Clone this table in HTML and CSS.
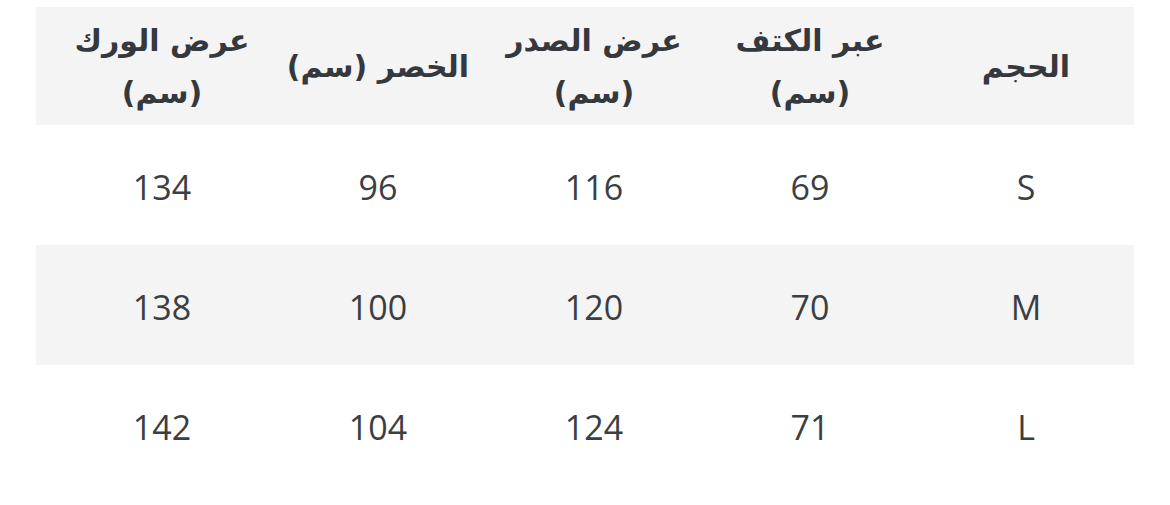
FILE: index.html
```html
<!DOCTYPE html>
<html lang="ar" dir="rtl">
<head>
<meta charset="utf-8">
<link rel="stylesheet" href="styles.css">
</head>
<body>
<div class="table">
  <div class="row head">
    <div class="cell">الحجم</div>
    <div class="cell">عبر الكتف<br>(سم)</div>
    <div class="cell">عرض الصدر<br>(سم)</div>
    <div class="cell">الخصر (سم)</div>
    <div class="cell">عرض الورك<br>(سم)</div>
  </div>
  <div class="row">
    <div class="cell">S</div>
    <div class="cell">69</div>
    <div class="cell">116</div>
    <div class="cell">96</div>
    <div class="cell">134</div>
  </div>
  <div class="row alt">
    <div class="cell">M</div>
    <div class="cell">70</div>
    <div class="cell">120</div>
    <div class="cell">100</div>
    <div class="cell">138</div>
  </div>
  <div class="row">
    <div class="cell">L</div>
    <div class="cell">71</div>
    <div class="cell">124</div>
    <div class="cell">104</div>
    <div class="cell">142</div>
  </div>
</div>
</body>
</html>
```
FILE: styles.css
```css
html, body {
  margin: 0;
  padding: 0;
  background: #ffffff;
}
body {
  padding: 7px 36px 0 36px;
  font-family: "Open Sans", "DejaVu Sans", sans-serif;
  color: #3b3e43;
}
.table {
  width: 1098px;
  display: flex;
  flex-direction: column;
}
.row {
  display: grid;
  grid-template-columns: repeat(5, 216px);
  padding-left: 18px;
  height: 120px;
  align-items: center;
}
.row.head {
  height: 118px;
  background: #f4f4f4;
}
.row.alt {
  background: #f4f4f4;
}
.cell {
  text-align: center;
  font-size: 34px;
  padding-top: 4px;
}
.head .cell {
  font-family: "DejaVu Sans", sans-serif;
  font-weight: bold;
  font-size: 30px;
  line-height: 52px;
  padding-top: 2px;
  color: #35383d;
}
```
